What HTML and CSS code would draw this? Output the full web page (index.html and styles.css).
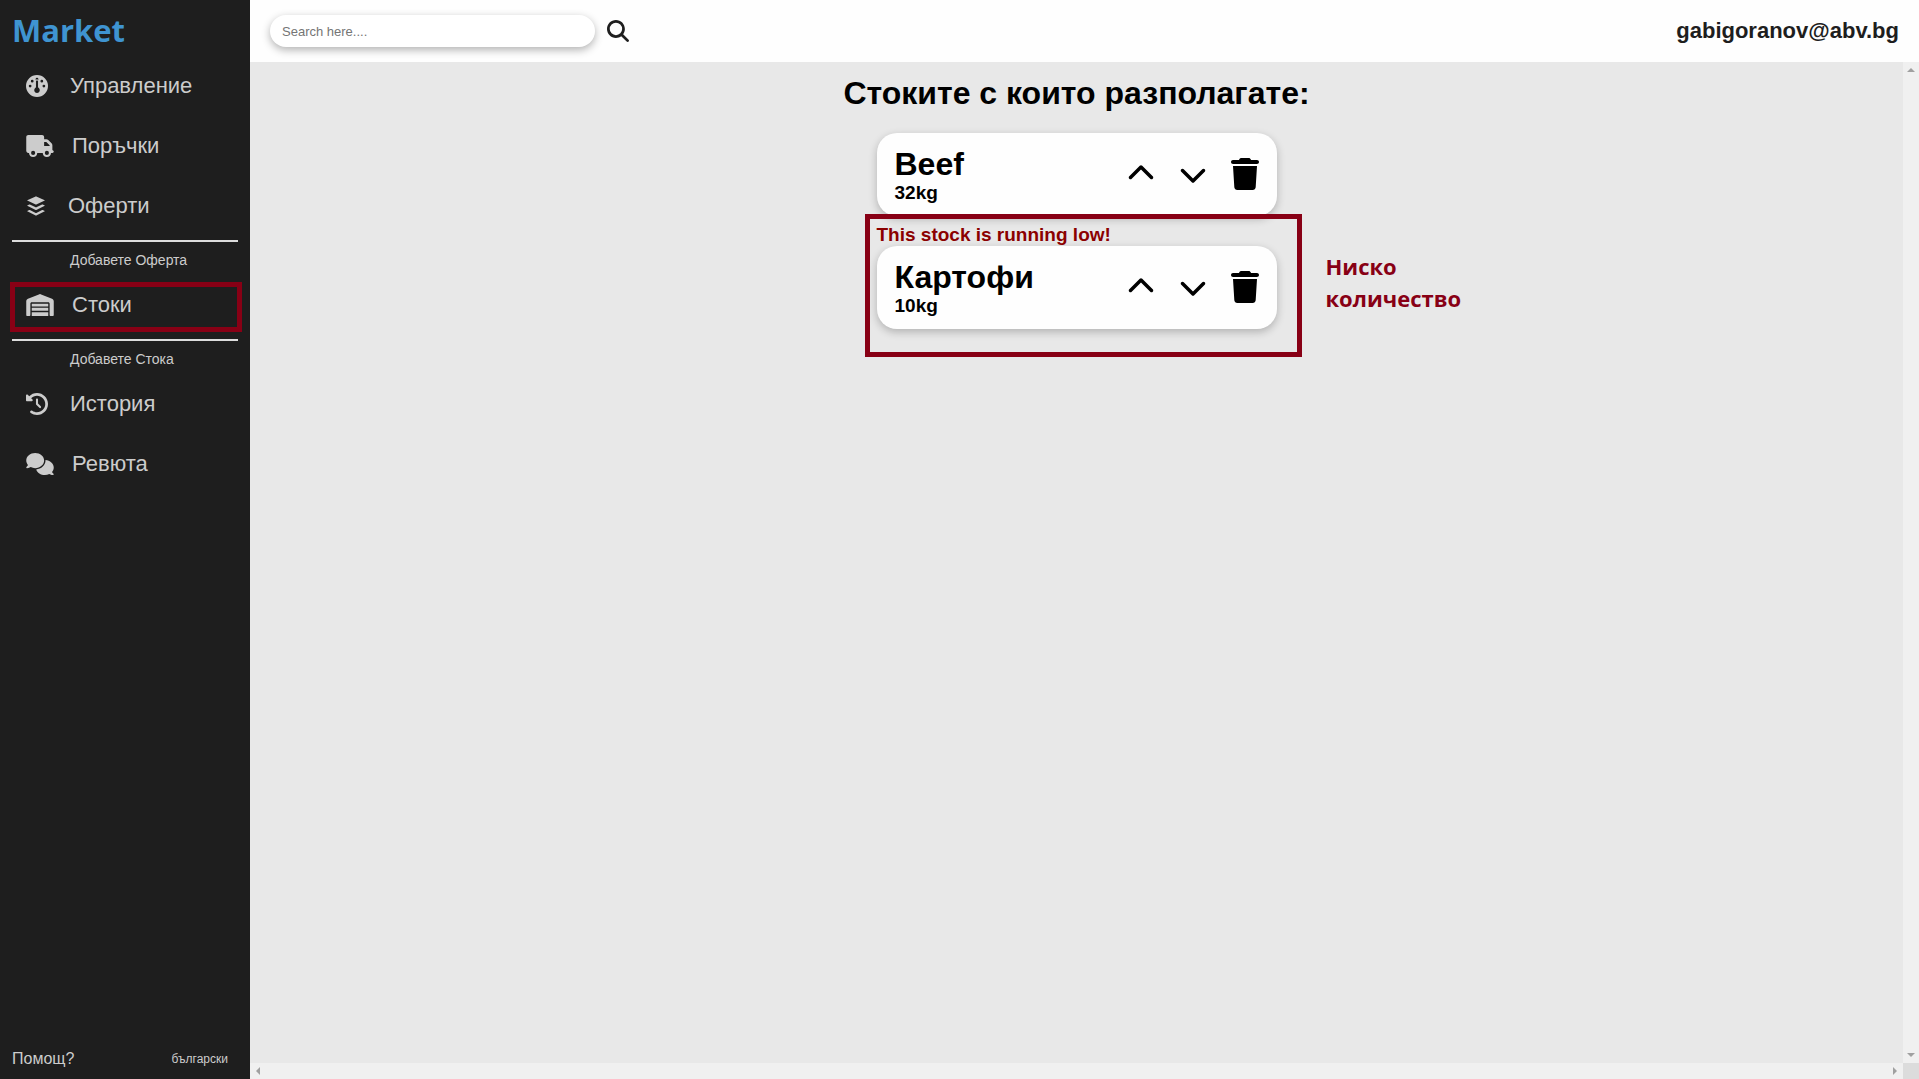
FILE: index.html
```html
<!DOCTYPE html>
<html lang="bg">
<head>
<meta charset="utf-8">
<meta name="viewport" content="width=device-width, initial-scale=1">
<title>Market</title>
<link rel="stylesheet" href="styles.css">
</head>
<body>
<svg class="sprite" aria-hidden="true">
  <symbol id="up" viewBox="0 0 512 512"><path d="M233.4 105.4c12.5-12.5 32.8-12.5 45.3 0l192 192c12.5 12.5 12.5 32.8 0 45.3s-32.8 12.5-45.3 0L256 173.3 86.6 342.6c-12.5 12.5-32.8 12.5-45.3 0s-12.5-32.8 0-45.3l192-192z"/></symbol>
  <symbol id="down" viewBox="0 0 512 512"><path d="M233.4 406.6c12.5 12.5 32.8 12.5 45.3 0l192-192c12.5-12.5 12.5-32.8 0-45.3s-32.8-12.5-45.3 0L256 338.7 86.6 169.4c-12.5-12.5-32.8-12.5-45.3 0s-12.5 32.8 0 45.3l192 192z"/></symbol>
  <symbol id="trash" viewBox="0 0 448 512"><path d="M135.2 17.7C140.6 6.8 151.7 0 163.8 0H284.200c12.100 0 23.200 6.800 28.600 17.700L320 32h96c17.700 0 32 14.300 32 32s-14.300 32-32 32H32C14.300 96 0 81.700 0 64S14.300 32 32 32h96l7.200-14.300zM32 128H416l-21.200 339c-1.600 25.300-22.600 45-47.900 45H101.100c-25.300 0-46.300-19.700-47.900-45L32 128z"/></symbol>
</svg>
<div class="app">
  <aside class="sidebar">
    <a class="brand" href="#">Market</a>
    <nav class="nav">
      <a class="nav-link" href="#">
        <svg class="icon" viewBox="0 0 512 512" width="22" height="22"><path fill-rule="evenodd" d="M0 256a256 256 0 1 1 512 0A256 256 0 1 1 0 256zM288 96a32 32 0 1 0-64 0 32 32 0 1 0 64 0zM256 416c35.300 0 64-28.700 64-64 0-17.400-6.900-33.100-18.100-44.600L280 285V120a24 24 0 0 0-48 0v165l-21.900 22.400C198.900 318.900 192 334.600 192 352c0 35.300 28.700 64 64 64zM176 144a32 32 0 1 0-64 0 32 32 0 1 0 64 0zM96 288a32 32 0 1 0 0-64 32 32 0 1 0 0 64zm352-32a32 32 0 1 0-64 0 32 32 0 1 0 64 0zM368 176a32 32 0 1 0 0-64 32 32 0 1 0 0 64z"/></svg>
        Управление
      </a>
      <a class="nav-link" href="#">
        <svg class="icon icon-wide" viewBox="0 0 640 512" width="28" height="22"><path d="M48 0C21.500 0 0 21.500 0 48V368c0 26.500 21.500 48 48 48H64c0 53 43 96 96 96s96-43 96-96H384c0 53 43 96 96 96s96-43 96-96h32c17.700 0 32-14.300 32-32s-14.300-32-32-32V288 256 237.300c0-17-6.700-33.300-18.700-45.300L512 114.700c-12-12-28.300-18.700-45.300-18.700H416V48c0-26.500-21.500-48-48-48H48zM416 160h50.700L544 237.300V256H416V160zM112 416a48 48 0 1 1 96 0 48 48 0 1 1-96 0zm368-48a48 48 0 1 1 0 96 48 48 0 1 1 0-96z"/></svg>
        Поръчки
      </a>
      <a class="nav-link" href="#">
        <svg class="icon" viewBox="0 0 448 512" width="20" height="22"><path d="M427.840 380.670l-196.500 97.820a18.600 18.600 0 0 1-14.670 0L20.160 380.670c-4-2-4-5.280 0-7.290L67.220 350a18.650 18.650 0 0 1 14.690 0l134.760 67a18.510 18.510 0 0 0 14.670 0l134.760-67a18.620 18.620 0 0 1 14.680 0l47.060 23.430c4.050 1.960 4.050 5.240 0 7.240zm0-136.530l-47.060-23.430a18.620 18.620 0 0 0-14.680 0l-134.760 67.080a18.680 18.680 0 0 1-14.670 0L81.910 220.710a18.650 18.650 0 0 0-14.690 0l-47.060 23.430c-4 2-4 5.290 0 7.310l196.510 97.800a18.600 18.600 0 0 0 14.670 0l196.500-97.800c4.050-2.020 4.050-5.300 0-7.310zM20.160 130.420l196.500 90.290a20.080 20.080 0 0 0 14.670 0l196.510-90.290c4-1.860 4-4.890 0-6.740L231.330 33.400a19.880 19.880 0 0 0-14.670 0l-196.500 90.280c-4.050 1.850-4.050 4.880 0 6.740z"/></svg>
        Оферти
      </a>
      <a class="nav-sub" href="#">Добавете Оферта</a>
      <a class="nav-link marked" href="#">
        <svg class="icon icon-wide" viewBox="0 0 640 512" width="28" height="22"><path d="M0 488V171.300c0-26.200 15.900-49.700 40.200-59.400L308.100 4.800c7.600-3.100 16.100-3.100 23.800 0L599.800 111.900c24.300 9.700 40.200 33.300 40.200 59.400V488c0 13.300-10.700 24-24 24H568c-13.300 0-24-10.700-24-24V224c0-17.700-14.300-32-32-32H128c-17.700 0-32 14.300-32 32V488c0 13.300-10.700 24-24 24H24c-13.300 0-24-10.700-24-24zM128 224H512v64H128V224zM128 320H512v72H128V320zM128 424H512v88H128V424z"/></svg>
        Стоки
      </a>
      <a class="nav-sub" href="#">Добавете Стока</a>
      <a class="nav-link" href="#">
        <svg class="icon" viewBox="0 0 512 512" width="22" height="22"><path d="M75 75L41 41C25.900 25.900 0 36.600 0 57.900V168c0 13.300 10.700 24 24 24H134.100c21.400 0 32.100-25.900 17-41l-30.800-30.800C155 85.500 203 64 256 64c106 0 192 86 192 192s-86 192-192 192c-40.800 0-78.600-12.700-109.700-34.400-14.500-10.100-34.400-6.600-44.600 7.900s-6.600 34.400 7.900 44.600C151.200 495 201.700 512 256 512c141.400 0 256-114.600 256-256S397.400 0 256 0C185.300 0 121.300 28.700 75 75zm181 53c-13.300 0-24 10.700-24 24V256c0 6.400 2.500 12.500 7 17l72 72c9.400 9.400 24.600 9.400 33.900 0s9.400-24.600 0-33.900l-65-65V152c0-13.300-10.700-24-24-24z"/></svg>
        История
      </a>
      <a class="nav-link" href="#">
        <svg class="icon icon-wide" viewBox="0 0 640 512" width="28" height="22"><path d="M208 352c114.900 0 208-78.800 208-176S322.900 0 208 0S0 78.800 0 176c0 38.600 14.700 74.300 39.600 103.400c-3.500 9.400-8.700 17.700-14.200 24.700c-4.800 6.200-9.700 11-13.300 14.300c-1.800 1.600-3.300 2.900-4.300 3.700c-.5 .4-.9 .7-1.100 .8l-.2 .2C1 327.200-1.400 334.400 .8 340.900S9.100 352 16 352c21.800 0 43.800-5.600 62.100-12.500c9.200-3.500 17.800-7.400 25.200-11.400C134.100 343.300 169.800 352 208 352zM448 176c0 112.300-99.100 196.900-216.500 207C255.800 457.400 336.400 512 432 512c38.200 0 73.900-8.700 104.700-23.900c7.500 4 16 7.900 25.200 11.400c18.300 6.900 40.300 12.500 62.100 12.500c6.900 0 13.100-4.500 15.200-11.100c2.100-6.600-.2-13.800-5.800-17.900l-.2-.2c-.2-.2-.6-.4-1.100-.8c-1-.8-2.500-2-4.300-3.700c-3.600-3.300-8.500-8.100-13.300-14.300c-5.500-7-10.700-15.400-14.200-24.700c24.900-29 39.600-64.700 39.600-103.400c0-92.800-84.900-168.900-192.600-175.500c.4 5.100 .6 10.300 .6 15.500z"/></svg>
        Ревюта
      </a>
    </nav>
    <footer class="sidebar-foot">
      <a class="help" href="#">Помощ?</a>
      <a class="lang" href="#">български</a>
    </footer>
  </aside>

  <div class="page">
    <header class="topbar">
      <form class="search">
        <input class="search-input" type="text" placeholder="Search here...." aria-label="Search">
        <button class="icon-btn search-btn" type="button" aria-label="Search">
          <svg viewBox="0 0 512 512" width="22" height="22"><path d="M416 208c0 45.900-14.900 88.300-40 122.700L502.600 457.400c12.500 12.500 12.500 32.800 0 45.300s-32.800 12.500-45.300 0L330.700 376c-34.400 25.200-76.800 40-122.700 40C93.100 416 0 322.900 0 208S93.100 0 208 0S416 93.100 416 208zM208 352a144 144 0 1 0 0-288 144 144 0 1 0 0 288z"/></svg>
        </button>
      </form>
      <a class="user" href="#">gabigoranov@abv.bg</a>
    </header>

    <div class="viewport">
      <main class="content">
        <h1 class="title">Стоките с които разполагате:</h1>
        <section class="stock">
          <div class="card">
            <div>
              <h2 class="name">Beef</h2>
              <p class="amount">32kg</p>
            </div>
            <div class="actions">
              <button class="icon-btn" type="button" aria-label="Increase"><svg width="28" height="28"><use href="#up"/></svg></button>
              <button class="icon-btn" type="button" aria-label="Decrease"><svg width="28" height="28"><use href="#down"/></svg></button>
              <button class="icon-btn" type="button" aria-label="Delete"><svg width="28" height="32"><use href="#trash"/></svg></button>
            </div>
          </div>
        </section>
        <section class="stock stock-low">
          <p class="warning">This stock is running low!</p>
          <div class="card">
            <div>
              <h2 class="name">Картофи</h2>
              <p class="amount">10kg</p>
            </div>
            <div class="actions">
              <button class="icon-btn" type="button" aria-label="Increase"><svg width="28" height="28"><use href="#up"/></svg></button>
              <button class="icon-btn" type="button" aria-label="Decrease"><svg width="28" height="28"><use href="#down"/></svg></button>
              <button class="icon-btn" type="button" aria-label="Delete"><svg width="28" height="32"><use href="#trash"/></svg></button>
            </div>
          </div>
          <div class="callout"><p class="callout-text">Ниско количество</p></div>
        </section>
      </main>
      <div class="scroll scroll-y" aria-hidden="true">
        <svg width="8" height="4" viewBox="0 0 8 4"><path d="M0 4 4 0 8 4z"/></svg>
        <svg width="8" height="4" viewBox="0 0 8 4"><path d="M0 0 4 4 8 0z"/></svg>
      </div>
      <div class="scroll scroll-x" aria-hidden="true">
        <svg width="4" height="8" viewBox="0 0 4 8"><path d="M4 0 0 4 4 8z"/></svg>
        <svg width="4" height="8" viewBox="0 0 4 8"><path d="M0 0 4 4 0 8z"/></svg>
      </div>
      <div class="corner"></div>
    </div>
  </div>
</div>
</body>
</html>
```
FILE: styles.css
```css
* {
  box-sizing: border-box;
  margin: 0;
}

body {
  font-family: "Liberation Sans", Arial, sans-serif;
  color: #000;
}

a {
  color: inherit;
  text-decoration: none;
}

svg {
  display: block;
  fill: currentColor;
}

.sprite {
  position: absolute;
  width: 0;
  height: 0;
}

.app {
  display: grid;
  grid-template-columns: 250px 1fr;
  min-height: 100vh;
}

/* Sidebar */
.sidebar {
  display: flex;
  flex-direction: column;
  background: #1e1e1e;
  color: #ccc;
}

.brand {
  height: 56px;
  padding: 8px 12px;
  font: bold 31px/44px "Open Sans", sans-serif;
  color: #3f94d1;
}

.nav-link {
  position: relative;
  display: flex;
  align-items: center;
  height: 60px;
  padding-left: 26px;
  font-size: 22px;
  line-height: 28px;
}

.icon {
  margin-right: 22px;
}

.icon-wide {
  margin-right: 18px;
}

.nav-sub {
  display: block;
  height: 35px;
  margin: 4px 12px 0;
  padding-left: 58px;
  border-top: 2px solid #ddd;
  font-size: 14px;
  line-height: 36px;
}

.marked::after {
  content: "";
  position: absolute;
  inset: 7px 8px 3px 10px;
  border: 5px solid #880015;
}

.sidebar-foot {
  display: flex;
  justify-content: space-between;
  align-items: center;
  margin-top: auto;
  padding: 10px 22px 11px 12px;
}

.help {
  font-size: 16px;
}

.lang {
  font-size: 12px;
}

/* Top bar */
.page {
  display: flex;
  flex-direction: column;
  min-width: 0;
}

.topbar {
  display: flex;
  justify-content: space-between;
  align-items: center;
  height: 62px;
  padding: 0 20px;
  background: #fefefe;
  color: #1e1e1e;
}

.search {
  display: flex;
  align-items: center;
  gap: 12px;
}

.search-input {
  width: 325px;
  height: 32px;
  padding: 0 12px;
  border: 0;
  border-radius: 16px;
  background: #fff;
  box-shadow: 0 3px 8px rgba(0, 0, 0, .3);
  font: 13px "Liberation Sans", Arial, sans-serif;
}

.search-input::placeholder {
  color: #757575;
}

.icon-btn {
  padding: 0;
  border: 0;
  background: none;
  color: inherit;
}

.user {
  font-size: 22px;
  font-weight: bold;
}

/* Content */
.viewport {
  flex: 1;
  display: grid;
  grid-template-columns: 1fr 16px;
  grid-template-rows: 1fr 16px;
  background: #e8e8e8;
}

.content {
  display: flex;
  flex-direction: column;
  align-items: center;
  padding-top: 11px;
}

.title {
  margin-bottom: 20px;
  font-size: 32px;
  line-height: 40px;
}

.stock {
  position: relative;
  width: 400px;
}

.stock-low {
  padding-top: 8px;
}

.warning {
  font-size: 19px;
  font-weight: bold;
  line-height: 22px;
  color: #8b0000;
}

.card {
  display: flex;
  justify-content: space-between;
  align-items: center;
  height: 83px;
  padding: 0 18px;
  border-radius: 20px;
  background: #fefefe;
  box-shadow: 0 3px 8px rgba(0, 0, 0, .24);
}

.name {
  font-size: 32px;
  line-height: 36px;
}

.amount {
  font-size: 19px;
  font-weight: bold;
  line-height: 22px;
}

.actions {
  display: flex;
  align-items: center;
  gap: 24px;
  padding-bottom: 2px;
}

.callout {
  position: absolute;
  inset: -2px -25px -28px -12px;
  border: 5px solid #880015;
  pointer-events: none;
}

.callout-text {
  position: absolute;
  left: 100%;
  top: 31px;
  margin-left: 29px;
  font: bold 22px/32px "Open Sans", sans-serif;
  color: #880015;
}

/* Scrollbars */
.scroll {
  display: flex;
  justify-content: space-between;
  align-items: center;
  padding: 6px;
  background: #f0f0f0;
  color: #a0a0a0;
}

.scroll-y {
  flex-direction: column;
}

.corner {
  background: #dcdcdc;
}
```
